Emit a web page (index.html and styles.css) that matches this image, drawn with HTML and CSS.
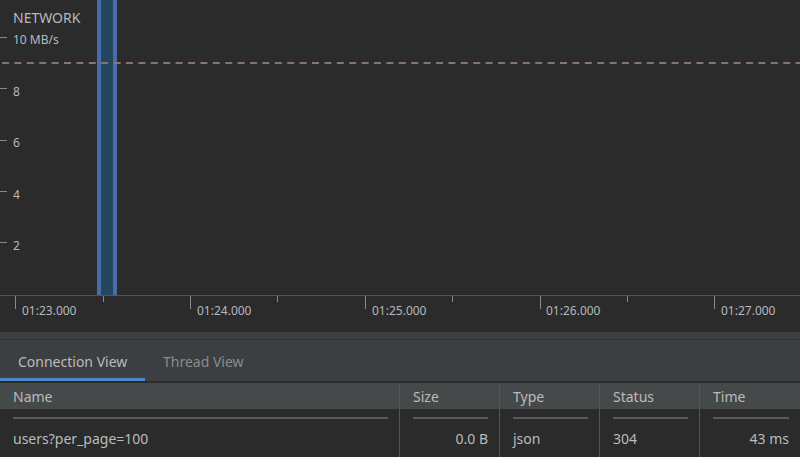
FILE: index.html
```html
<!DOCTYPE html>
<html>
<head>
<meta charset="utf-8">
<link rel="stylesheet" href="styles.css">
</head>
<body>
<div class="app">
  <div class="chart">
    <svg class="chart-svg" width="800" height="332" viewBox="0 0 800 332">
      <rect x="97" y="0" width="20" height="295" class="bar-edge"/>
      <rect x="101" y="0" width="12" height="295" class="bar-fill"/>
      <line x1="2" y1="63" x2="800" y2="63" class="limit"/>
      <g class="yticks">
        <line x1="0" y1="37.5" x2="7" y2="37.5"/>
        <line x1="0" y1="88.5" x2="7" y2="88.5"/>
        <line x1="0" y1="140.5" x2="7" y2="140.5"/>
        <line x1="0" y1="191.5" x2="7" y2="191.5"/>
        <line x1="0" y1="242.5" x2="7" y2="242.5"/>
      </g>
      <line x1="0" y1="295.5" x2="800" y2="295.5" class="axis"/>
      <g class="xticks">
        <line x1="15.5" y1="296" x2="15.5" y2="309"/>
        <line x1="103.5" y1="296" x2="103.5" y2="302"/>
        <line x1="190.5" y1="296" x2="190.5" y2="309"/>
        <line x1="277.5" y1="296" x2="277.5" y2="302"/>
        <line x1="365.5" y1="296" x2="365.5" y2="309"/>
        <line x1="452.5" y1="296" x2="452.5" y2="302"/>
        <line x1="540.5" y1="296" x2="540.5" y2="309"/>
        <line x1="627.5" y1="296" x2="627.5" y2="302"/>
        <line x1="714.5" y1="296" x2="714.5" y2="309"/>
      </g>
      <text x="13" y="23" class="title">NETWORK</text>
      <text x="13" y="44" class="ylabel">10 MB/s</text>
      <text x="13" y="96" class="ylabel">8</text>
      <text x="13" y="147" class="ylabel">6</text>
      <text x="13" y="199" class="ylabel">4</text>
      <text x="13" y="250" class="ylabel">2</text>
      <text x="22" y="315" class="xlabel">01:23.000</text>
      <text x="197" y="315" class="xlabel">01:24.000</text>
      <text x="372" y="315" class="xlabel">01:25.000</text>
      <text x="546" y="315" class="xlabel">01:26.000</text>
      <text x="721" y="315" class="xlabel">01:27.000</text>
    </svg>
  </div>
  <div class="band"></div>
  <div class="tabs">
    <div class="tab active">Connection View</div>
    <div class="tab">Thread View</div>
  </div>
  <div class="table">
    <div class="row head">
      <div class="cell">Name</div>
      <div class="cell sep">Size</div>
      <div class="cell sep">Type</div>
      <div class="cell sep">Status</div>
      <div class="cell sep">Time</div>
    </div>
    <div class="row rules">
      <div class="cell"><div class="rule"></div></div>
      <div class="cell sep"><div class="rule"></div></div>
      <div class="cell sep"><div class="rule"></div></div>
      <div class="cell sep"><div class="rule"></div></div>
      <div class="cell sep"><div class="rule"></div></div>
    </div>
    <div class="row data">
      <div class="cell">users?per_page=100</div>
      <div class="cell sep num">0.0 B</div>
      <div class="cell sep">json</div>
      <div class="cell sep">304</div>
      <div class="cell sep num">43 ms</div>
    </div>
  </div>
</div>
</body>
</html>
```
FILE: styles.css
```css
html, body {
  margin: 0;
  padding: 0;
  background: #2b2b2b;
}
body {
  width: 800px;
  height: 457px;
  overflow: hidden;
  font-family: "Noto Sans", "Open Sans", sans-serif;
  color: #bbbbbb;
}
.app {
  display: flex;
  flex-direction: column;
  width: 800px;
  height: 457px;
}
.chart {
  height: 332px;
  background: #2b2b2b;
}
.chart-svg {
  display: block;
}
.bar-edge { fill: #4a6daa; }
.bar-fill { fill: #25465f; }
.limit {
  stroke: #8b7870;
  stroke-width: 2;
  stroke-dasharray: 7 5.4;
  opacity: 0.95;
}
.yticks line, .xticks line {
  stroke: #8a8a8a;
  stroke-width: 1;
}
.axis {
  stroke: #555555;
  stroke-width: 1;
}
.chart-svg text {
  font-family: "Noto Sans", "Open Sans", sans-serif;
  fill: #b4b9bf;
}
.title { font-size: 14px; }
.ylabel { font-size: 12px; }
.xlabel { font-size: 12px; }
.band {
  height: 7px;
  background: #3c3f41;
  border-bottom: 1px solid #2f3133;
}
.tabs {
  display: flex;
  height: 41px;
  background: #3c3f41;
  border-bottom: 2px solid #2b2b2b;
}
.tab {
  display: flex;
  align-items: center;
  height: 33px;
  padding: 5px 16px 0 18px;
  font-size: 14px;
  color: #8c8c8c;
  border-bottom: 3px solid transparent;
}
.tab.active {
  width: 111px;
  color: #bbbbbb;
  border-bottom-color: #4a88c7;
}
.table {
  flex: 1;
  display: flex;
  flex-direction: column;
}
.row {
  display: grid;
  grid-template-columns: 399px 100px 100px 100px 101px;
}
.cell {
  padding: 0 11px 0 13px;
  font-size: 14px;
  white-space: nowrap;
}
.cell.sep {
  border-left: 1px solid #555555;
}
.head {
  height: 26px;
  background: #45494a;
}
.head .cell {
  line-height: 24px;
  padding-top: 2px;
}
.rules .cell {
  padding-top: 8px;
  height: 14px;
}
.rule {
  height: 2px;
  background: #5a5a5a;
}
.data {
  flex: 1;
}
.data .cell {
  line-height: 16px;
  padding-top: 0;
}
.num {
  text-align: right;
}
```
